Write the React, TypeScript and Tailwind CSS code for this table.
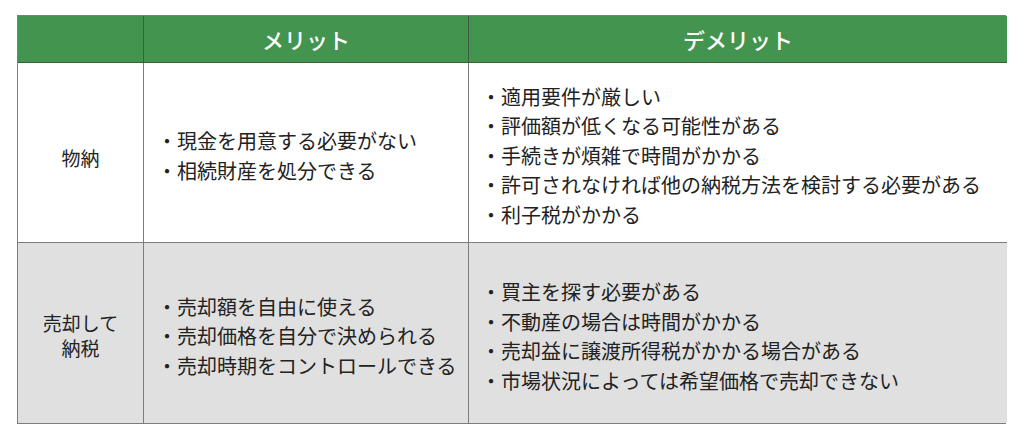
const rows = [
  {
    label: ['物納'],
    merits: ['現金を用意する必要がない', '相続財産を処分できる'],
    demerits: [
      '適用要件が厳しい',
      '評価額が低くなる可能性がある',
      '手続きが煩雑で時間がかかる',
      '許可されなければ他の納税方法を検討する必要がある',
      '利子税がかかる',
    ],
    bg: 'bg-white',
  },
  {
    label: ['売却して', '納税'],
    merits: ['売却額を自由に使える', '売却価格を自分で決められる', '売却時期をコントロールできる'],
    demerits: [
      '買主を探す必要がある',
      '不動産の場合は時間がかかる',
      '売却益に譲渡所得税がかかる場合がある',
      '市場状況によっては希望価格で売却できない',
    ],
    bg: 'bg-[#e0e0e0]',
  },
];

function List({ items }: { items: string[] }) {
  return (
    <ul className="leading-[29.5px]">
      {items.map((t) => (
        <li key={t}>・{t}</li>
      ))}
    </ul>
  );
}

export default function App() {
  return (
    <div
      className="min-h-screen w-full bg-white pt-[15px] pl-[17px] text-[#222]"
      style={{ fontFamily: '"Noto Sans CJK JP", "Noto Sans", sans-serif' }}
    >
      <div className="grid w-[989px] grid-cols-[126px_325px_538px] border-[1.5px] border-[#7d7d7d]">
        <div className="h-[47px] border-r border-b border-[#3d5c40] bg-[#43944e]" />
        <div className="flex h-[47px] items-center justify-center border-r border-b border-[#3d5c40] bg-[#43944e] text-[22px] font-medium text-white">
          メリット
        </div>
        <div className="flex h-[47px] items-center justify-center border-b border-[#3d5c40] bg-[#43944e] text-[22px] font-medium text-white">
          デメリット
        </div>
        {rows.map((r, i) => (
          <div key={i} className="contents">
            <div
              className={`${r.bg} flex h-[180px] flex-col items-center justify-center border-r border-[#7d7d7d] text-[19px] leading-[25px] ${
                i === 0 ? 'border-b pt-[10px]' : 'pt-[4px]'
              }`}
            >
              {r.label.map((l) => (
                <span key={l}>{l}</span>
              ))}
            </div>
            <div
              className={`${r.bg} flex h-[180px] items-center border-r border-[#7d7d7d] pl-[13px] pt-[6px] text-[20px] ${
                i === 0 ? 'border-b' : ''
              }`}
            >
              <List items={r.merits} />
            </div>
            <div
              className={`${r.bg} flex h-[180px] items-center border-[#7d7d7d] pl-[12px] pt-[6px] text-[20px] ${
                i === 0 ? 'border-b' : ''
              }`}
            >
              <List items={r.demerits} />
            </div>
          </div>
        ))}
      </div>
    </div>
  );
}
